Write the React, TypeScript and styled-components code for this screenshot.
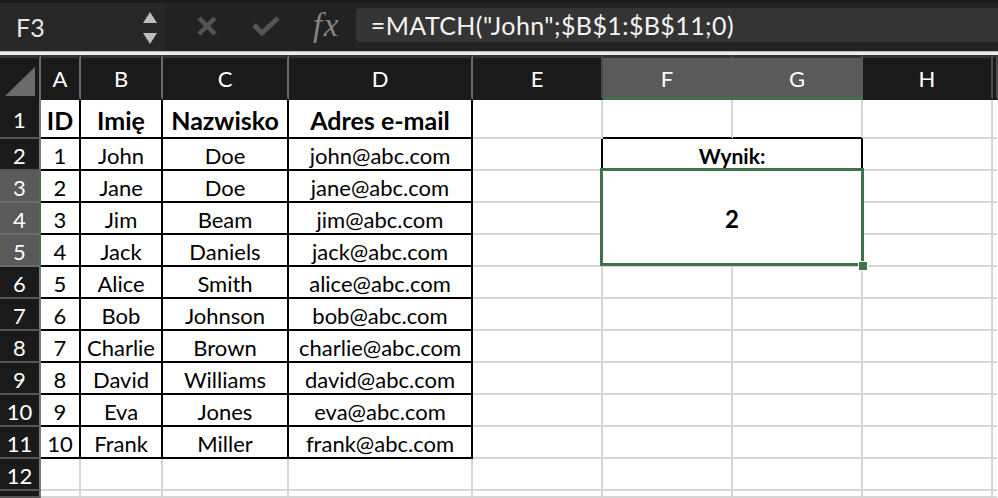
import React from 'react';
import styled, { createGlobalStyle } from 'styled-components';

const FONT = `"Lato", "Open Sans", "Noto Sans", sans-serif`;
const GREEN = '#3f7249';
const GRID = '#d6d6d6';
const INK = '#000000';

const Global = createGlobalStyle`
  html, body { margin: 0; padding: 0; background: #ffffff; overflow: hidden; }
  body { font-family: ${FONT}; }
  * { box-sizing: border-box; }
`;

const Screen = styled.div`
  width: 998px;
  height: 498px;
  display: flex;
  flex-direction: column;
  overflow: hidden;
  background: #ffffff;
`;

const Toolbar = styled.div`
  height: 51px;
  flex: none;
  display: flex;
  align-items: stretch;
  background: #222222;
  border-top: 3px solid #1b1b1b;
`;

const NameBox = styled.div`
  width: 165px;
  flex: none;
  display: flex;
  align-items: center;
  justify-content: space-between;
  padding: 0 8px 0 16px;
  background: #272727;
  color: #e4e4e4;
  font-size: 25px;
`;

const Spinner = styled.div`
  display: flex;
  flex-direction: column;
  gap: 10px;
  padding-top: 1px;
`;

const Actions = styled.div`
  display: flex;
  align-items: center;
  gap: 35px;
  padding: 0 0 2px 32px;
`;

const Fx = styled.div`
  display: flex;
  align-items: center;
  font-family: "Liberation Serif", "DejaVu Serif", serif;
  font-style: italic;
  font-size: 33px;
  color: #858585;
  margin: 0 16px 0 33px;
  padding-bottom: 4px;
  letter-spacing: 1.5px;
`;

const FormulaInput = styled.div`
  flex: 1;
  margin: 5px 0 9px 0;
  background: #343434;
  border-radius: 4px 0 0 4px;
  padding: 0 0 1px 15px;
  display: flex;
  align-items: center;
  color: #f4f4f4;
  font-size: 25px;
  letter-spacing: 0.4px;
  white-space: nowrap;
`;

const Band = styled.div`
  height: 4px;
  flex: none;
  background: linear-gradient(#b9b9b9 0 1px, #ececec 1px);
`;

const Sheet = styled.div`
  flex: 1;
  display: grid;
  grid-template-columns: 41px 40px 82px 126px 184px 130px 130px 130px 130px 1fr;
  grid-template-rows: 45px 39px repeat(11, 32px) 1fr;
  background: #ffffff;
`;

const Corner = styled.div`
  background: #1a1a1a;
  border-top: 3px solid #353535;
  border-right: 2px solid #6a6a6a;
  display: flex;
  align-items: flex-end;
  justify-content: flex-end;
  padding: 0 4px 4px 0;
`;

const ColHead = styled.div<{ $sel?: boolean }>`
  background: ${(p) => (p.$sel ? '#5a5a5a' : '#1a1a1a')};
  border-top: 3px solid #353535;
  border-right: 2px solid ${(p) => (p.$sel ? '#5a5a5a' : '#4c4c4c')};
  border-bottom: 3px solid ${(p) => (p.$sel ? GREEN : '#1a1a1a')};
  color: #ffffff;
  font-size: 22px;
  display: flex;
  align-items: center;
  justify-content: center;
  padding-top: 2px;
`;

const ColHeadRule = styled(ColHead)`
  border-right-color: #6a6a6a;
`;

const RowHead = styled.div<{ $sel?: boolean }>`
  background: ${(p) => (p.$sel ? '#5a5a5a' : '#1a1a1a')};
  border-bottom: 2px solid ${(p) => (p.$sel ? '#6a6a6a' : '#555555')};
  border-right: 2px solid ${(p) => (p.$sel ? GREEN : '#7a7a7a')};
  color: #ffffff;
  font-size: 22px;
  display: flex;
  align-items: center;
  justify-content: center;
  padding-top: 2px;
`;

const Cell = styled.div<{ $r?: string; $b?: string; $bold?: boolean; $size?: number }>`
  border-right: 2px solid ${(p) => p.$r || GRID};
  border-bottom: 2px solid ${(p) => p.$b || GRID};
  color: #000000;
  font-size: ${(p) => p.$size || 22}px;
  font-weight: ${(p) => (p.$bold ? 700 : 400)};
  display: flex;
  align-items: center;
  justify-content: center;
  padding-top: 3px;
  white-space: nowrap;
  overflow: visible;
`;

const MergedLabel = styled(Cell)`
  grid-column: span 2;
`;

const MergedResult = styled(Cell)`
  grid-column: span 2;
  grid-row: span 3;
  position: relative;
  z-index: 2;
  padding-top: 0;
`;

const SelectionFrame = styled.div`
  position: absolute;
  top: -3px;
  left: -3px;
  right: -3px;
  bottom: -1px;
  border: 3px solid ${GREEN};
  pointer-events: none;
`;

const FillHandle = styled.div`
  position: absolute;
  right: -7px;
  bottom: -6px;
  width: 10px;
  height: 10px;
  background: ${GREEN};
  border: 1px solid #ffffff;
`;

const Tri = ({ up }: { up?: boolean }) => (
  <svg width="14" height="11" viewBox="0 0 14 11">
    <polygon points={up ? '7,0 14,11 0,11' : '0,0 14,0 7,11'} fill="#bdbdbd" />
  </svg>
);

const CrossIcon = () => (
  <svg width="20" height="20" viewBox="0 0 20 20">
    <path d="M2 2 L18 18 M18 2 L2 18" stroke="#545454" strokeWidth="4.5" />
  </svg>
);

const CheckIcon = () => (
  <svg width="28" height="20" viewBox="0 0 28 20">
    <path d="M2 9 L10 17 L26 2" stroke="#545454" strokeWidth="5" fill="none" />
  </svg>
);

const CornerMark = () => (
  <svg width="30" height="29" viewBox="0 0 30 29">
    <polygon points="30,0 30,29 0,29" fill="#6b6b6b" />
  </svg>
);

type Person = [string, string, string, string];

const header: Person = ['ID', 'Imię', 'Nazwisko', 'Adres e-mail'];
const people: Person[] = [
  ['1', 'John', 'Doe', 'john@abc.com'],
  ['2', 'Jane', 'Doe', 'jane@abc.com'],
  ['3', 'Jim', 'Beam', 'jim@abc.com'],
  ['4', 'Jack', 'Daniels', 'jack@abc.com'],
  ['5', 'Alice', 'Smith', 'alice@abc.com'],
  ['6', 'Bob', 'Johnson', 'bob@abc.com'],
  ['7', 'Charlie', 'Brown', 'charlie@abc.com'],
  ['8', 'David', 'Williams', 'david@abc.com'],
  ['9', 'Eva', 'Jones', 'eva@abc.com'],
  ['10', 'Frank', 'Miller', 'frank@abc.com'],
];

const columns = ['A', 'B', 'C', 'D', 'E', 'F', 'G', 'H'];

export default function App() {
  const rows: React.ReactNode[] = [];

  rows.push(<RowHead key="rh1">1</RowHead>);
  header.forEach((h, i) =>
    rows.push(
      <Cell key={`h${i}`} $r={INK} $b={INK} $bold $size={25}>
        {h}
      </Cell>
    )
  );
  rows.push(<Cell key="e1" />);
  rows.push(<Cell key="f1" $b={INK} />);
  rows.push(<Cell key="g1" $b={INK} />);
  rows.push(<Cell key="h1" />);
  rows.push(<Cell key="x1" $r="transparent" />);

  people.forEach((p, idx) => {
    const n = idx + 2;
    const sel = n >= 3 && n <= 5;
    rows.push(
      <RowHead key={`rh${n}`} $sel={sel}>
        {n}
      </RowHead>
    );
    p.forEach((v, i) =>
      rows.push(
        <Cell key={`c${n}-${i}`} $r={INK} $b={INK}>
          {v}
        </Cell>
      )
    );
    rows.push(<Cell key={`e${n}`} $r={n === 2 ? INK : undefined} />);
    if (n === 2) {
      rows.push(
        <MergedLabel key="wynik" $r={INK} $b={INK} $bold $size={21}>
          Wynik:
        </MergedLabel>
      );
    }
    if (n === 3) {
      rows.push(
        <MergedResult key="result" $bold $size={24}>
          2
          <SelectionFrame />
          <FillHandle />
        </MergedResult>
      );
    }
    if (n > 5) {
      rows.push(<Cell key={`f${n}`} />);
      rows.push(<Cell key={`g${n}`} />);
    }
    rows.push(<Cell key={`hh${n}`} />);
    rows.push(<Cell key={`x${n}`} $r="transparent" />);
  });

  [12, 13].forEach((n) => {
    rows.push(<RowHead key={`rh${n}`}>{n === 12 ? n : ''}</RowHead>);
    for (let i = 0; i < 8; i++) rows.push(<Cell key={`z${n}-${i}`} />);
    rows.push(<Cell key={`zx${n}`} $r="transparent" />);
  });

  return (
    <>
      <Global />
      <Screen>
        <Toolbar>
          <NameBox>
            <span>F3</span>
            <Spinner>
              <Tri up />
              <Tri />
            </Spinner>
          </NameBox>
          <Actions>
            <CrossIcon />
            <CheckIcon />
          </Actions>
          <Fx>fx</Fx>
          <FormulaInput>=MATCH("John";$B$1:$B$11;0)</FormulaInput>
        </Toolbar>
        <Band />
        <Sheet>
          <Corner>
            <CornerMark />
          </Corner>
          {columns.map((c) => {
            const sel = c === 'F' || c === 'G';
            return c === 'A' || c === 'B' || c === 'C' || c === 'D' ? (
              <ColHeadRule key={c}>{c}</ColHeadRule>
            ) : (
              <ColHead key={c} $sel={sel}>
                {c}
              </ColHead>
            );
          })}
          <ColHead key="rest" />
          {rows}
        </Sheet>
      </Screen>
    </>
  );
}
